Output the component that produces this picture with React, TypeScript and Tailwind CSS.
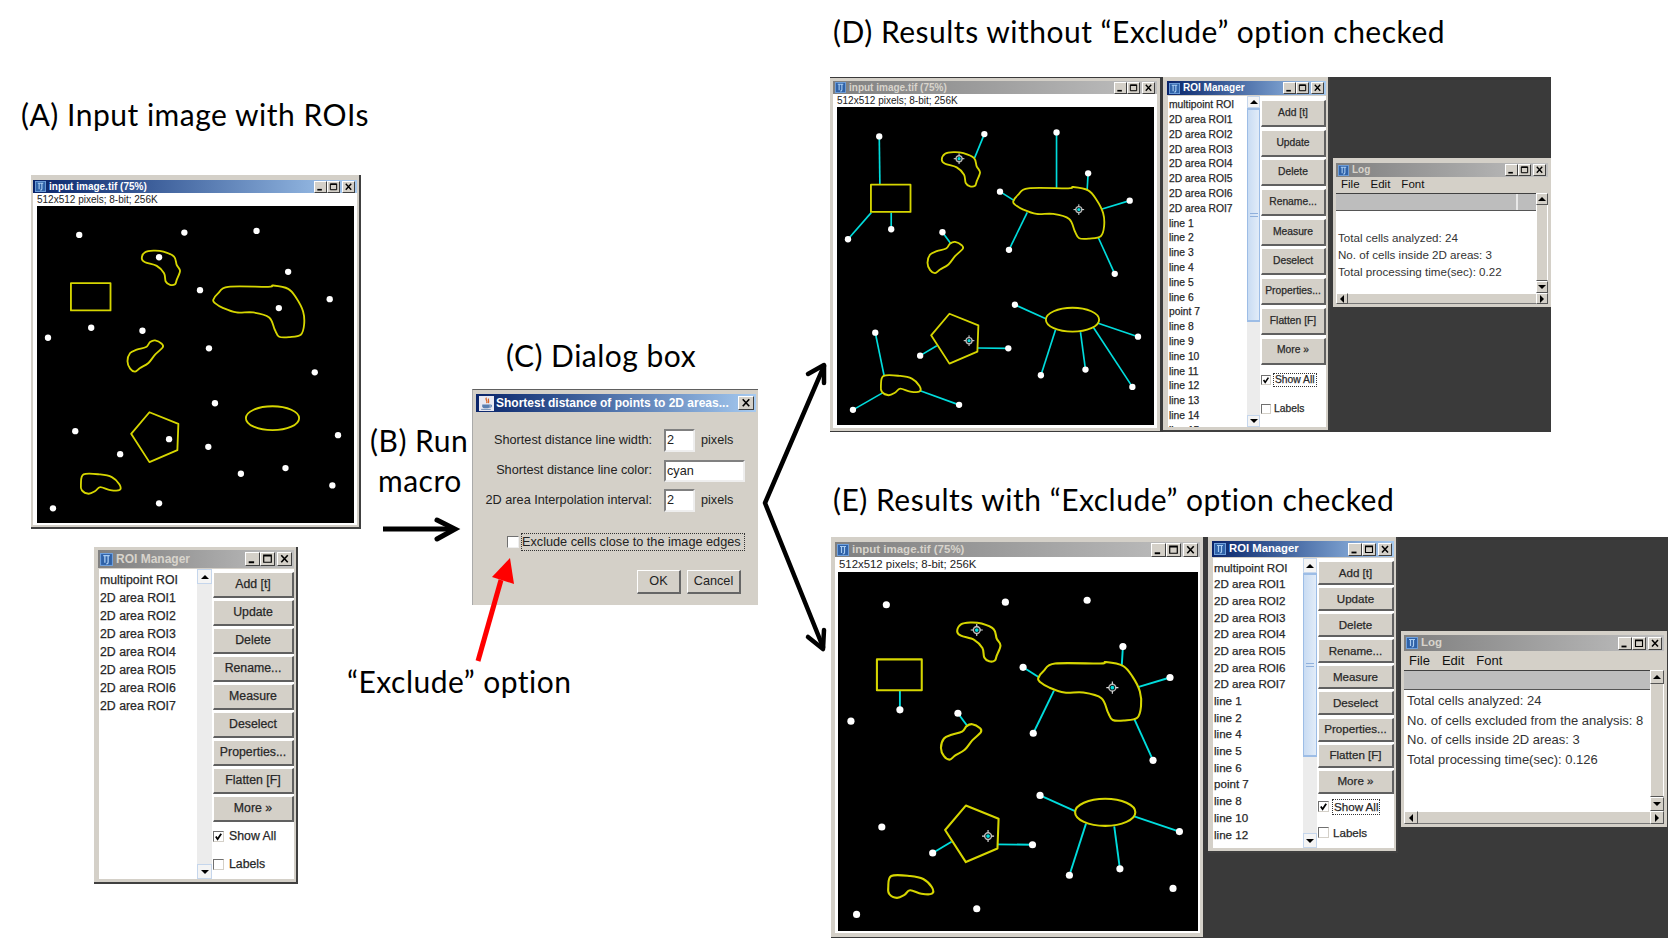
import React from "react";

type Pt = [number, number];

const UI_FONT = "font-['Liberation_Sans',Arial,sans-serif]";
const INK = "[-webkit-text-stroke:0.25px_#333]";
const LABEL = "absolute whitespace-nowrap font-['Lato','Noto_Sans',sans-serif] text-black leading-none text-[30px] tracking-[0.5px]";

// shapes and dots are in the coordinates of the 512x512 image as displayed (953 units wide)
const blobs: Pt[][] = [
    [[315, 157], [325, 139], [350, 134], [380, 137], [412, 152], [420, 177], [430, 195], [420, 222], [415, 235], [400, 237], [387, 227], [382, 202], [360, 180], [325, 169]],
    [[530, 282], [545, 262], [575, 243], [695, 243], [710, 239], [755, 249], [780, 277], [800, 317], [803, 357], [793, 387], [760, 394], [728, 393], [715, 372], [698, 335], [650, 320], [600, 320], [560, 307], [535, 292]],
    [[272, 467], [280, 442], [300, 432], [328, 424], [340, 409], [355, 404], [375, 414], [378, 425], [355, 447], [335, 472], [310, 487], [295, 498], [280, 489]],
    [[140, 807], [190, 807], [225, 815], [248, 837], [248, 854], [220, 854], [190, 845], [175, 857], [155, 865], [135, 855], [132, 837]],
];

const dots: { at: Pt; to?: Pt; edge?: boolean }[] = [
    { at: [127, 87], to: [129, 233], edge: true },
    { at: [443, 80], to: [413, 153], edge: true },
    { at: [660, 75], to: [660, 243], edge: true },
    { at: [367, 154] },
    { at: [755, 198], to: [752, 248] },
    { at: [490, 253], to: [533, 280] },
    { at: [880, 280], to: [797, 305] },
    { at: [727, 307] },
    { at: [163, 366], to: [163, 316] },
    { at: [317, 375], to: [343, 410] },
    { at: [33, 396], to: [103, 316], edge: true },
    { at: [517, 428], to: [572, 315] },
    { at: [835, 500], to: [785, 390] },
    { at: [535, 593], to: [628, 635] },
    { at: [115, 677], to: [142, 808], edge: true },
    { at: [397, 701] },
    { at: [905, 689], to: [783, 648] },
    { at: [250, 746], to: [300, 716] },
    { at: [515, 724], to: [422, 723] },
    { at: [747, 788], to: [732, 675] },
    { at: [613, 805], to: [657, 668] },
    { at: [888, 840], to: [770, 660], edge: true },
    { at: [367, 894], to: [248, 851], edge: true },
    { at: [48, 909], to: [137, 858], edge: true },
];

const roiNames = ["multipoint ROI", "2D area ROI1", "2D area ROI2", "2D area ROI3", "2D area ROI4", "2D area ROI5", "2D area ROI6", "2D area ROI7"];
const buttons = ["Add [t]", "Update", "Delete", "Rename...", "Measure", "Deselect", "Properties...", "Flatten [F]", "More »"];

function smooth(points: Pt[]) {
    const n = points.length;
    let d = `M${points[0][0]} ${points[0][1]}`;
    for (let i = 0; i < n; i++) {
        const p0 = points[(i - 1 + n) % n], p1 = points[i], p2 = points[(i + 1) % n], p3 = points[(i + 2) % n];
        d += `C${p1[0] + (p2[0] - p0[0]) / 6} ${p1[1] + (p2[1] - p0[1]) / 6} ${p2[0] - (p3[0] - p1[0]) / 6} ${p2[1] - (p3[1] - p1[1]) / 6} ${p2[0]} ${p2[1]}`;
    }
    return d + "Z";
}

const Plot: React.FC<{ mode: "plain" | "lines" | "exclude"; className: string }> = ({ mode, className }) => {
    const shown = dots.filter(d => d.to && (mode === "lines" || (mode === "exclude" && !d.edge)));
    return (
        <svg viewBox="0 0 953 953" className={`block bg-black ${className}`}>
            <g stroke="#00dcdc" strokeWidth="5">
                {shown.map((d, i) => <line key={i} x1={d.at[0]} y1={d.at[1]} x2={d.to![0]} y2={d.to![1]} />)}
            </g>
            <g fill="none" stroke="#d6d600" strokeWidth="5.5" strokeLinejoin="round">
                {blobs.map((b, i) => <path key={i} d={smooth(b)} />)}
                <rect x="102" y="232" width="119" height="82" />
                <polygon points="338,620 425,655 422,734 338,770 283,685" />
                <ellipse cx="708" cy="638" rx="80" ry="36" />
            </g>
            {dots.map((d, i) => {
                if (mode !== "plain" && !d.to) {
                    return (
                        <g key={i} transform={`translate(${d.at[0]} ${d.at[1]})`}>
                            <circle r="9" fill="none" stroke="#b5b5b5" strokeWidth="4" />
                            <path d="M0 -16V-9M0 9V16M-16 0H-9M9 0H16" stroke="#e0e0e0" strokeWidth="3" />
                            <circle r="5" fill="#00dcdc" />
                        </g>
                    );
                }
                return <circle key={i} cx={d.at[0]} cy={d.at[1]} r="9.5" fill="#fff" />;
            })}
        </svg>
    );
};

const IJIcon: React.FC<{ className: string }> = ({ className }) => (
    <svg viewBox="0 0 12 12" className={`shrink-0 ${className}`}>
        <rect x="0.5" y="0.5" width="11" height="11" fill="#2f62a8" stroke="#6fa0dc" />
        <path d="M3 2.5H9M4.5 2.5V9M7.5 2.5V8.5C7.5 10 6.5 10 5.8 10" fill="none" stroke="#a9cdf2" strokeWidth="1.2" />
    </svg>
);

const JavaIcon = () => (
    <svg viewBox="0 0 14 14" className="w-[15px] h-[15px] shrink-0">
        <rect width="14" height="14" fill="#e9e9f2" />
        <path d="M7 1.5C5 3.5 9 4.5 7 6.5M9 2.5C8 4 10 5 8.5 6.5" fill="none" stroke="#d8662a" strokeWidth="1.2" />
        <path d="M3 8H10V9.5C10 11 8.5 11.5 6.5 11.5C4.5 11.5 3 11 3 9.5Z" fill="#5a7fb0" />
        <path d="M10 8.5C12.5 8.2 12 10.5 9.5 10.5" fill="none" stroke="#5a7fb0" />
        <path d="M2 12.5H11" stroke="#7a93b8" />
    </svg>
);

const CtlButton: React.FC<{ kind: "min" | "max" | "close"; size: string }> = ({ kind, size }) => (
    <div className={`bg-[#d4d0c8] border border-t-white border-l-white border-r-[#404040] border-b-[#404040] ${size}`}>
        <svg viewBox="0 0 12 11" className="block w-full h-full">
            {kind === "min" && <path d="M2.5 8.5H7.5" stroke="#000" strokeWidth="1.8" />}
            {kind === "max" && <path d="M2.5 2H9.5V8.5H2.5ZM2.5 2.7H9.5" fill="none" stroke="#000" strokeWidth="1.1" />}
            {kind === "close" && <path d="M3 2L9 8.5M9 2L3 8.5" stroke="#000" strokeWidth="1.5" />}
        </svg>
    </div>
);

const TitleBar: React.FC<{
    title: string;
    active?: boolean;
    bar: string;
    text: string;
    icon: string;
    ctl: string;
}> = ({ title, active, bar, text, icon, ctl }) => (
    <div className={`flex items-center shrink-0 pl-[2px] pr-[2px] bg-linear-to-r ${active ? "from-[#0a246a] to-[#a6caf0] text-white" : "from-[#808080] to-[#c0c0c0] text-[#d8d4cc]"} ${bar}`}>
        <IJIcon className={icon} />
        <span className={`ml-[3px] font-bold whitespace-nowrap leading-none ${text}`}>{title}</span>
        <div className="ml-auto flex items-center">
            <CtlButton kind="min" size={ctl} />
            <CtlButton kind="max" size={ctl} />
            <div className="w-[2px]" />
            <CtlButton kind="close" size={ctl} />
        </div>
    </div>
);

const Tri: React.FC<{ dir: "up" | "down" | "left" | "right" }> = ({ dir }) => {
    const pts = { up: "0,5 8,5 4,1", down: "0,1 8,1 4,5", left: "6,0 6,8 2,4", right: "2,0 2,8 6,4" }[dir];
    const cls = dir === "up" || dir === "down" ? "w-[8px] h-[6px]" : "w-[8px] h-[8px]";
    return <svg viewBox={dir === "up" || dir === "down" ? "0 0 8 6" : "0 0 8 8"} className={cls}><polygon points={pts} fill="#000" /></svg>;
};

const SmallBtn: React.FC<{ dir: "up" | "down" | "left" | "right"; className: string; blue?: boolean }> = ({ dir, className, blue }) => (
    <div className={`flex items-center justify-center shrink-0 border ${blue ? "bg-[#f4f4f4] border-[#c5d6ec]" : "bg-[#d4d0c8] border-t-white border-l-white border-r-[#555] border-b-[#555]"} ${className}`}>
        <Tri dir={dir} />
    </div>
);

const RoiScroll: React.FC<{ width: string; btn: string; thumb?: string }> = ({ width, btn, thumb }) => (
    <div className={`flex flex-col shrink-0 bg-[#ececec] ${width}`}>
        <SmallBtn dir="up" className={btn} blue />
        {thumb ? (
            <div className={`flex items-center justify-center shrink-0 bg-linear-to-r from-[#c9dcf3] to-[#e2ecf8] border-y-2 border-x border-[#9dbde6] ${thumb}`}>
                <div className="w-[8px] h-[4px] border-y border-[#8fb0dc]" />
            </div>
        ) : null}
        <div className="flex-1" />
        <SmallBtn dir="down" className={btn} blue />
    </div>
);

type RoiSize = {
    frame: string; bar: string; titleText: string; icon: string; ctl: string;
    listW: string; listPt: string; scrollW: string; scrollBtn: string; thumb?: string;
    rowH: string; text: string; colPad: string; btn: string; gap: string; check: string; checkBox: string; checkMt: string; gapText: string;
};

const Check: React.FC<{ label: string; on?: boolean; focus?: boolean; row: string; text: string; box: string; gap: string }> = ({ label, on, focus, row, text, box, gap }) => (
    <div className={`flex items-center ${row} ${gap}`}>
        <div className={`shrink-0 bg-white border border-t-[#707070] border-l-[#707070] border-r-[#d4d0c8] border-b-[#d4d0c8] ${box}`}>
            {on && <svg viewBox="0 0 10 10" className="block w-full h-full"><path d="M2 5L4 8L8 2" fill="none" stroke="#000" strokeWidth="2" /></svg>}
        </div>
        <span className={`whitespace-nowrap leading-none text-[#222] ${INK} ${text} ${focus ? "outline-1 outline-dotted outline-[#333] px-[1px] py-[1px]" : ""}`}>{label}</span>
    </div>
);

const RoiManager: React.FC<{ s: RoiSize; names: string[]; active?: boolean; focus?: boolean }> = ({ s, names, active, focus }) => (
    <div className={`absolute flex flex-col bg-[#d4d0c8] border-r-2 border-b-2 border-[#404040] ${s.frame} ${UI_FONT}`}>
        <TitleBar title="ROI Manager" active={active} bar={s.bar} text={s.titleText} icon={s.icon} ctl={s.ctl} />
        <div className="flex flex-1 min-h-0 mt-[1px] bg-white">
            <div className={`overflow-hidden shrink-0 pl-[1px] bg-white text-[#222] border-l border-[#d4d0c8] ${INK} ${s.listPt} ${s.listW} ${s.text}`}>
                {names.map((n, i) => <div key={i} className={`flex items-center whitespace-nowrap leading-none ${s.rowH}`}>{n}</div>)}
            </div>
            <RoiScroll width={s.scrollW} btn={s.scrollBtn} thumb={s.thumb} />
            <div className={`flex flex-col flex-1 pl-[1px] ${s.colPad}`}>
                <div className={`flex flex-col ${s.gap}`}>
                    {buttons.map(b => (
                        <div key={b} className={`flex items-center justify-center bg-[#d4d0c8] border-t border-l border-t-white border-l-white border-r-2 border-b-2 border-r-[#606060] border-b-[#606060] text-[#222] leading-none ${INK} ${s.btn} ${s.text}`}>{b}</div>
                    ))}
                </div>
                <div className={s.checkMt}>
                    <Check label="Show All" on focus={focus} row={s.check} text={s.text} box={s.checkBox} gap={s.gapText} />
                    <Check label="Labels" row={s.check} text={s.text} box={s.checkBox} gap={s.gapText} />
                </div>
            </div>
        </div>
    </div>
);

const roiA: RoiSize = {
    frame: "left-[94px] top-[547px] w-[204px] h-[337px] pl-[4px] pr-[2px] pt-[3px] pb-[3px]",
    bar: "h-[18px]", titleText: "text-[12px]", icon: "w-[13px] h-[13px]", ctl: "w-[15px] h-[14px]",
    listW: "w-[99px]", listPt: "pt-[2px]", scrollW: "w-[15px]", scrollBtn: "h-[15px]",
    rowH: "h-[18px]", text: "text-[12.3px]", colPad: "pt-[3px]", btn: "h-[26px]", gap: "gap-[2px]",
    check: "h-[28px]", checkBox: "w-[11px] h-[11px]", checkMt: "", gapText: "gap-[5px]",
};

const roiD: RoiSize = {
    frame: "left-[1163px] top-[77px] w-[167px] h-[355px] pl-[4px] pr-[2px] pt-[4px] pb-[3px]",
    bar: "h-[14px]", titleText: "text-[10px]", icon: "w-[11px] h-[11px]", ctl: "w-[13px] h-[12px]",
    listW: "w-[80px]", listPt: "pt-[2px]", scrollW: "w-[13px]", scrollBtn: "h-[12px]", thumb: "h-[214px]",
    rowH: "h-[14.8px]", text: "text-[10.3px]", colPad: "pt-[4px]", btn: "h-[27px]", gap: "gap-[2.7px]",
    check: "h-[29px]", checkBox: "w-[10px] h-[10px]", checkMt: "mt-[1px]", gapText: "gap-[3px]",
};

const roiE: RoiSize = {
    frame: "left-[1208px] top-[537px] w-[190px] h-[316px] pl-[4px] pr-[2px] pt-[4px] pb-[3px]",
    bar: "h-[16px]", titleText: "text-[11.3px]", icon: "w-[12px] h-[12px]", ctl: "w-[14px] h-[13px]",
    listW: "w-[91px]", listPt: "pt-[1px]", scrollW: "w-[14px]", scrollBtn: "h-[15px]", thumb: "h-[184px]",
    rowH: "h-[16.7px]", text: "text-[11.6px]", colPad: "pt-[3px]", btn: "h-[24px]", gap: "gap-[2.1px]",
    check: "h-[26px]", checkBox: "w-[11px] h-[11px]", checkMt: "", gapText: "gap-[4px]",
};

const namesD = [...roiNames, "line 1", "line 2", "line 3", "line 4", "line 5", "line 6", "point 7", "line 8", "line 9", "line 10", "line 11", "line 12", "line 13", "line 14", "line 15"];
const namesE = [...roiNames, "line 1", "line 2", "line 4", "line 5", "line 6", "point 7", "line 8", "line 10", "line 12"];

const LogWindow: React.FC<{
    frame: string; bar: string; titleText: string; icon: string; ctl: string; menuH: string; menuText: string; menuGap: string;
    grayH: string; lines: string[]; rowH: string; bodyPad: string; text: string; scrollW: string; btn: string; hBar: string; sep?: boolean;
}> = ({ frame, bar, titleText, icon, ctl, menuH, menuText, menuGap, grayH, lines, rowH, bodyPad, text, scrollW, btn, hBar, sep }) => (
    <div className={`absolute flex flex-col bg-[#d4d0c8] pl-[3px] pr-[3px] pb-[3px] ${frame} ${UI_FONT}`}>
        <TitleBar title="Log" bar={bar} text={titleText} icon={icon} ctl={ctl} />
        <div className={`flex items-center shrink-0 pl-[5px] text-[#111] ${menuH} ${menuText} ${menuGap}`}>
            <span>File</span><span>Edit</span><span>Font</span>
        </div>
        <div className="flex flex-1 min-h-0">
            <div className="flex flex-col flex-1 min-w-0">
                <div className={`flex justify-end shrink-0 bg-[#bdbdbd] border-t border-t-[#404040] border-b border-b-[#555] ${grayH}`}>
                    {sep && <div className="w-[20px] border-l-2 border-l-[#e8e8e8]" />}
                </div>
                <div className={`flex-1 bg-white text-[#333] ${bodyPad} ${text}`}>
                    {lines.map(l => <div key={l} className={`flex items-center whitespace-nowrap leading-none ${rowH}`}>{l}</div>)}
                </div>
            </div>
            <div className={`flex flex-col shrink-0 bg-[#d4d0c8] ${scrollW}`}>
                <SmallBtn dir="up" className={btn} />
                <div className="flex-1 border-x border-b border-x-white border-b-[#555]" />
                <SmallBtn dir="down" className={btn} />
            </div>
        </div>
        <div className={`flex shrink-0 ${hBar}`}>
            <SmallBtn dir="left" className={`h-full ${scrollW}`} />
            <div className="flex-1 border-y border-t-white border-b-[#777]" />
            <SmallBtn dir="right" className={`h-full ${scrollW}`} />
        </div>
    </div>
);

const ImageWindow: React.FC<{
    frame: string; active?: boolean; bar: string; titleText: string; icon: string; ctl: string;
    infoH: string; infoText: string; plot: string; mode: "plain" | "lines" | "exclude";
}> = ({ frame, active, bar, titleText, icon, ctl, infoH, infoText, plot, mode }) => (
    <div className={`absolute flex flex-col bg-[#d4d0c8] ${frame} ${UI_FONT}`}>
        <TitleBar title="input image.tif (75%)" active={active} bar={bar} text={titleText} icon={icon} ctl={ctl} />
        <div className={`flex items-center shrink-0 bg-white pl-[4px] text-[#222] leading-none ${infoH} ${infoText}`}>512x512 pixels; 8-bit; 256K</div>
        <div className="bg-white pl-[3px] pb-[2px] flex-1">
            <Plot mode={mode} className={plot} />
        </div>
    </div>
);

const Input: React.FC<{ value: string; className: string }> = ({ value, className }) => (
    <div className={`bg-white border-t-2 border-l-2 border-t-[#808080] border-l-[#808080] border-r-2 border-b-2 border-r-[#eee] border-b-[#eee] pl-[1px] flex items-center leading-none ${className}`}>{value}</div>
);

const DlgRow: React.FC<{ label: string; pixels?: boolean; cls: string; input: React.ReactNode }> = ({ label, pixels, cls, input }) => (
    <div className={`flex items-center ${cls}`}>
        <div className="w-[176px] text-right whitespace-nowrap">{label}</div>
        <div className="ml-[12px]">{input}</div>
        {pixels && <div className="ml-[6px]">pixels</div>}
    </div>
);

const Dialog = () => (
    <div className={`absolute left-[472px] top-[389px] w-[286px] h-[216px] flex flex-col bg-[#d4d0c8] border-t border-t-[#606060] border-l border-l-[#aaa] pl-[3px] pr-[2px] pt-[4px] text-[12.7px] text-[#222] ${UI_FONT}`}>
        <div className="flex items-center h-[18px] shrink-0 pl-[3px] pr-[2px] bg-linear-to-r from-[#0a246a] to-[#a6caf0] text-white">
            <JavaIcon />
            <span className="ml-[2px] font-bold text-[12px] whitespace-nowrap leading-none">Shortest distance of points to 2D areas...</span>
            <div className="ml-auto"><CtlButton kind="close" size="w-[16px] h-[14px]" /></div>
        </div>
        <DlgRow label="Shortest distance line width:" pixels cls="mt-[17px] h-[23px]" input={<Input value="2" className="w-[31px] h-[23px]" />} />
        <DlgRow label="Shortest distance line color:" cls="mt-[8px] h-[22px]" input={<Input value="cyan" className="w-[81px] h-[22px]" />} />
        <DlgRow label="2D area Interpolation interval:" pixels cls="mt-[7px] h-[23px]" input={<Input value="2" className="w-[31px] h-[23px]" />} />
        <div className="flex items-center mt-[22px] h-[16px] pl-[31px]">
            <div className="w-[12px] h-[12px] bg-white border border-t-[#707070] border-l-[#707070] border-r-[#eee] border-b-[#eee] shrink-0" />
            <div className="ml-[3px] w-[222px] h-[16px] flex items-center whitespace-nowrap outline-1 outline-dotted outline-[#333] leading-none">Exclude cells close to the image edges</div>
        </div>
        <div className="flex justify-end gap-[6px] mt-[20px] pr-[15px]">
            <div className="flex items-center justify-center w-[44px] h-[24px] border-t border-l border-t-white border-l-white border-r-2 border-b-2 border-r-[#666] border-b-[#666]">OK</div>
            <div className="flex items-center justify-center w-[54px] h-[24px] border-t border-l border-t-white border-l-white border-r-2 border-b-2 border-r-[#666] border-b-[#666]">Cancel</div>
        </div>
    </div>
);

const Arrows = () => (
    <svg viewBox="0 0 1668 938" className="absolute inset-0 w-[1668px] h-[938px] pointer-events-none">
        <g fill="none" stroke="#000" strokeWidth="5" strokeLinejoin="miter">
            <path d="M383 529H453" />
            <path d="M437 520L455 529L437 539" strokeLinecap="round" />
        </g>
        <g fill="none" stroke="#000" strokeWidth="4.5" strokeLinecap="round" strokeLinejoin="round">
            <path d="M824 366L765 503L823 647" />
            <path d="M808 374L824 365L824 383" />
            <path d="M808 637L823 649L824 630" />
        </g>
        <path d="M478 661L501 580" stroke="#ff0000" strokeWidth="5" fill="none" />
        <polygon points="510,558 492,577 514,584" fill="#ff0000" />
    </svg>
);

export default function App() {
    return (
        <div className="relative w-[1668px] h-[938px] overflow-hidden bg-white">
            <div className={`${LABEL} left-[21px] top-[99px]`}>(A) Input image with ROIs</div>
            <div className={`${LABEL} left-[833px] top-[16px]`}>(D) Results without “Exclude” option checked</div>
            <div className={`${LABEL} left-[833px] top-[484px]`}>(E) Results with “Exclude” option checked</div>
            <div className={`${LABEL} left-[506px] top-[340px]`}>(C) Dialog box</div>
            <div className={`${LABEL} left-[370px] top-[425px]`}>(B) Run</div>
            <div className={`${LABEL} left-[378px] top-[465px]`}>macro</div>
            <div className={`${LABEL} left-[347px] top-[666px]`}>“Exclude” option</div>

            <div className="absolute left-[830px] top-[77px] w-[721px] h-[355px] bg-[#3a3a3a]" />
            <div className="absolute left-[831px] top-[537px] w-[837px] h-[401px] bg-[#3a3a3a]" />

            <ImageWindow
                frame="left-[31px] top-[175px] w-[330px] h-[354px] pl-[2px] pr-[2px] pt-[5px] pb-[3px] border-r-2 border-b-2 border-[#404040]"
                active bar="h-[13px]" titleText="text-[10px]" icon="w-[11px] h-[11px]" ctl="w-[13px] h-[12px]"
                infoH="h-[13px]" infoText="text-[10px]" plot="ml-[1px] w-[317px] h-[317px]" mode="plain"
            />
            <RoiManager s={roiA} names={roiNames} />

            <Dialog />

            <ImageWindow
                frame="left-[830px] top-[78px] w-[330px] h-[353px] pl-[3px] pr-[3px] pt-[3px] pb-[3px]"
                bar="h-[13px]" titleText="text-[10px]" icon="w-[11px] h-[11px]" ctl="w-[13px] h-[12px]"
                infoH="h-[13px]" infoText="text-[10px]" plot="ml-[1px] w-[317px] h-[318px]" mode="lines"
            />
            <RoiManager s={roiD} names={namesD} active focus />
            <LogWindow
                frame="left-[1333px] top-[158px] w-[218px] h-[149px] pt-[5px]"
                bar="h-[14px]" titleText="text-[10px]" icon="w-[11px] h-[11px]" ctl="w-[13px] h-[12px]"
                menuH="h-[16px]" menuText="text-[11.5px]" menuGap="gap-[11px]" grayH="h-[18px]"
                lines={["Total cells analyzed: 24", "No. of cells inside 2D areas: 3", "Total processing time(sec): 0.22"]}
                rowH="h-[17.3px]" bodyPad="pt-[18px] pl-[2px]" text="text-[11.6px]" scrollW="w-[12px]" btn="h-[12px]" hBar="h-[11px]" sep
            />

            <ImageWindow
                frame="left-[831px] top-[537px] w-[372px] h-[400px] pl-[4px] pr-[3px] pt-[5px] pb-[4px]"
                bar="h-[15px]" titleText="text-[11.5px]" icon="w-[12px] h-[12px]" ctl="w-[15px] h-[14px]"
                infoH="h-[15px]" infoText="text-[11.4px]" plot="w-[360px] h-[359px]" mode="exclude"
            />
            <RoiManager s={roiE} names={namesE} active focus />
            <LogWindow
                frame="left-[1401px] top-[631px] w-[266px] h-[196px] pt-[4px]"
                bar="h-[16px]" titleText="text-[11.5px]" icon="w-[12px] h-[12px]" ctl="w-[14px] h-[13px]"
                menuH="h-[19px]" menuText="text-[13px]" menuGap="gap-[12px]" grayH="h-[20px]"
                lines={["Total cells analyzed: 24", "No. of cells excluded from the analysis: 8", "No. of cells inside 2D areas: 3", "Total processing time(sec): 0.126"]}
                rowH="h-[19.5px]" bodyPad="pt-[1px] pl-[3px]" text="text-[13px]" scrollW="w-[14px]" btn="h-[14px]" hBar="h-[13px]"
            />

            <Arrows />
        </div>
    );
}
